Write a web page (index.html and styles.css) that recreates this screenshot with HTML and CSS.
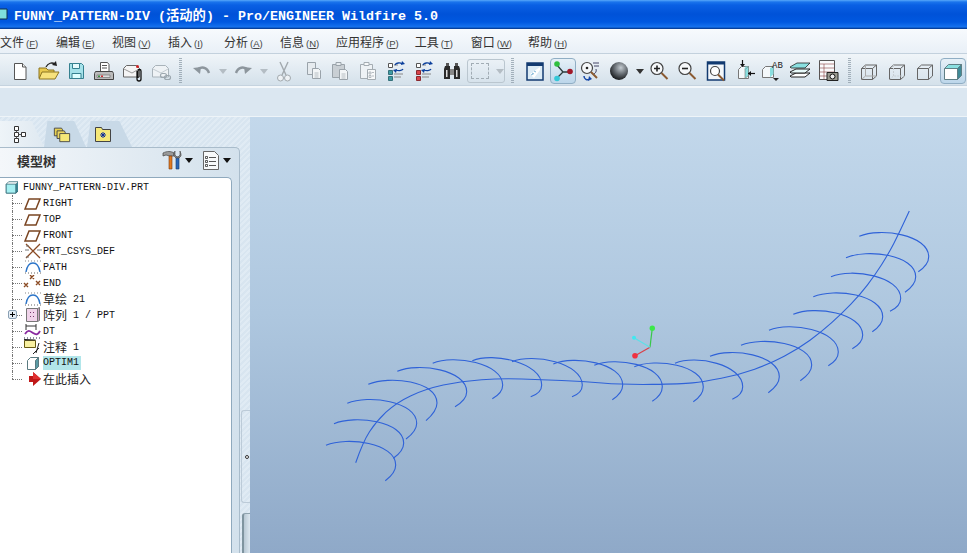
FILE: index.html
```html
<!DOCTYPE html>
<html lang="zh">
<head>
<meta charset="utf-8">
<title>Pro/ENGINEER Wildfire 5.0</title>
<link rel="stylesheet" href="styles.css">
</head>
<body>
<div class="app">
  <header class="titlebar">
    <svg class="title-icon" viewBox="0 0 8 12"><path d="M-4 1h11v10h-11z" fill="#7fe0dc" stroke="#12324a"/></svg>
    <span>FUNNY_PATTERN-DIV (活动的) - Pro/ENGINEER Wildfire 5.0</span>
  </header>
  <nav class="menubar">
    <span class="menu">文件<i>(<u>F</u>)</i></span>
    <span class="menu">编辑<i>(<u>E</u>)</i></span>
    <span class="menu">视图<i>(<u>V</u>)</i></span>
    <span class="menu">插入<i>(<u>I</u>)</i></span>
    <span class="menu">分析<i>(<u>A</u>)</i></span>
    <span class="menu">信息<i>(<u>N</u>)</i></span>
    <span class="menu">应用程序<i>(<u>P</u>)</i></span>
    <span class="menu">工具<i>(<u>T</u>)</i></span>
    <span class="menu">窗口<i>(<u>W</u>)</i></span>
    <span class="menu">帮助<i>(<u>H</u>)</i></span>
  </nav>
  <div class="toolbar">
    <svg class="ic" viewBox="0 0 28 24"><path d="M8.500 4.500h8l3.500 3.500v12.500h-11.500z" fill="#fff" stroke="#555"/><path d="M16.500 4.500v3.500h3.500" fill="#eee" stroke="#555"/></svg>
    <svg class="ic" viewBox="0 0 28 24"><path d="M5 19V9h7l2 2h6v8z" fill="#e8c94e" stroke="#8c7420"/><path d="M5 20l3-7h17l-4 7z" fill="#f7e27c" stroke="#8c7420"/><path d="M12 8c2-4 6-5 9-3" fill="none" stroke="#222" stroke-width="1.300"/><path d="M22 2l1 5-5-1z" fill="#222"/></svg>
    <svg class="ic" viewBox="0 0 28 24"><path d="M7.500 4.500h12l2 2v13h-14z" fill="#a5e2ea" stroke="#35808f"/><path d="M10.500 4.500h7v5h-7z" fill="#e6fafc" stroke="#35808f"/><path d="M10 14.500h9v5h-9z" fill="#dff" stroke="#35808f"/></svg>
    <svg class="ic" viewBox="0 0 28 24"><path d="M10.500 3.500h7l1.500 2v7h-8.500z" fill="#fff" stroke="#555"/><path d="M12 6.500h5M12 9h5" stroke="#555"/><path d="M5.500 12.500h17l1 2v6h-19v-6z" fill="#bbb" stroke="#444"/><path d="M7 16h13v2.500H7z" fill="#ddd" stroke="#666" stroke-width=".6"/><path d="M8 16.500h2v1.500H8z" fill="#3a8f40"/><path d="M11 16.500h2v1.500h-2z" fill="#c33"/></svg>
    <svg class="ic" viewBox="0 0 28 24"><path d="M5.500 9.500l3-3h10l3 3v8.500h-16z" fill="#f5f5f5" stroke="#666"/><path d="M6 10l8 4 7-4" fill="none" stroke="#999"/><circle cx="19.500" cy="7.500" r="1.500" fill="#c22"/><path d="M19 12v8a2 2 0 0 0 4 0v-8a1.500 1.500 0 0 0-3 0v7" fill="none" stroke="#111" stroke-width="1.300"/></svg>
    <svg class="ic dim" viewBox="0 0 28 24"><path d="M6.500 9.500l3-3h10l3 3v8.500h-16z" fill="#eef2f5" stroke="#a9b3ba"/><path d="M7 10l8 4 7-4" fill="none" stroke="#c4ccd2"/><rect x="14.500" y="14.500" width="6" height="4" rx="2" fill="none" stroke="#9ca7af" stroke-width="1.200"/><rect x="18.500" y="16.500" width="6" height="4" rx="2" fill="none" stroke="#9ca7af" stroke-width="1.200"/></svg>
    <span class="sep"></span>
    <svg class="ic" viewBox="0 0 28 24"><path d="M9 11c4-4 10-3 12 3" fill="none" stroke="#8d969d" stroke-width="2.400"/><path d="M5 9l8-1-1 7z" fill="#8d969d"/></svg>
    <span class="caret pale"></span>
    <svg class="ic" viewBox="0 0 28 24"><path d="M19 11c-4-4-10-3-12 3" fill="none" stroke="#8d969d" stroke-width="2.400"/><path d="M23 9l-8-1 1 7z" fill="#8d969d"/></svg>
    <span class="caret pale"></span>
    <svg class="ic" viewBox="0 0 28 24"><path d="M10 3l6 13M18 3l-6 13" stroke="#a2a9ae" stroke-width="1.400"/><circle cx="10.500" cy="19" r="3" fill="#eef2f5" stroke="#a2a9ae"/><circle cx="17.500" cy="19" r="3" fill="#eef2f5" stroke="#a2a9ae"/></svg>
    <svg class="ic gap-l" viewBox="0 0 28 24"><path d="M7.500 3.500h8v12h-8z" fill="#e6ebef" stroke="#9aa3aa"/><path d="M12.500 9.500h6l2 2v8h-8z" fill="#f2f5f7" stroke="#9aa3aa"/><path d="M14.500 14h4M14.500 16h4M14.500 18h4" stroke="#a8b0b6" stroke-width=".8"/></svg>
    <svg class="ic" viewBox="0 0 28 24"><path d="M6.500 5.500h12v13h-12z" fill="#c9cfd4" stroke="#9aa3aa"/><path d="M10 3.500h5v3h-5z" fill="#e6ebef" stroke="#9aa3aa"/><path d="M13.500 10.500h6l2 2v8h-8z" fill="#f2f5f7" stroke="#9aa3aa"/><path d="M15.500 15h4M15.500 17h4M15.500 19h4" stroke="#a8b0b6" stroke-width=".8"/></svg>
    <svg class="ic" viewBox="0 0 28 24"><path d="M6.500 5.500h12v14h-12z" fill="#eef2f5" stroke="#a4acb2"/><path d="M10 3.500h5v3h-5z" fill="#f6f8f9" stroke="#a4acb2"/><path d="M13.500 10.500h8v10h-8z" fill="#f7f9fa" stroke="#a4acb2"/><path d="M15 13h2v2h-2zM15 16.500h2v2h-2zM18 13.500h2M18 17h2" fill="none" stroke="#a4acb2" stroke-width=".8"/></svg>
    <svg class="ic" viewBox="0 0 28 24"><path d="M6.500 4.500h4v4h-4z" fill="#fff" stroke="#555"/><path d="M6.500 11.500h4v4h-4zM6.500 17.500h4v4h-4z" fill="#3f9ca4" stroke="#35707a"/><path d="M12 6h4M12 15h9M12 18h7" stroke="#888"/><path d="M13 6c1-2 5-3 7-1" fill="none" stroke="#0b3f9c" stroke-width="1.300"/><path d="M20 2l3 3-4 1z" fill="#0b3f9c"/><path d="M21 10c-1 2-5 2-7 1" fill="none" stroke="#0b3f9c" stroke-width="1.300"/><path d="M14 14l-3-3 4-1z" fill="#0b3f9c"/></svg>
    <svg class="ic" viewBox="0 0 28 24"><path d="M6.500 4.500h4v4h-4z" fill="#fff" stroke="#555"/><path d="M6.500 11.500h4v4h-4zM6.500 17.500h4v4h-4z" fill="#d8434a" stroke="#8a2a30"/><path d="M12 6h4M12 15h9M12 18h7" stroke="#888"/><path d="M13 6c1-2 5-3 7-1" fill="none" stroke="#0b3f9c" stroke-width="1.300"/><path d="M20 2l3 3-4 1z" fill="#0b3f9c"/><path d="M21 10c-1 2-5 2-7 1" fill="none" stroke="#0b3f9c" stroke-width="1.300"/><path d="M14 14l-3-3 4-1z" fill="#0b3f9c"/></svg>
    <svg class="ic" viewBox="0 0 28 24"><path d="M7 7h5v13H6V10zM16 7h5l1 3v10h-6z" fill="#2a2a2a"/><path d="M8 4h3v3H8zM17 4h3v3h-3z" fill="#555"/><path d="M12 10h4v6h-4z" fill="#888"/><path d="M8 11h1.500v7H8zM18 11h1.500v7H18z" fill="#ddd"/></svg>
    <span class="selbox"><span class="dash"></span><span class="caret pale"></span></span>
    <span class="sep wide"></span>
    <svg class="ic" viewBox="0 0 28 24"><rect x="6" y="4" width="16" height="17" fill="#dcebf5" stroke="#123a70" stroke-width="1.500"/><path d="M6 4h16v3H6z" fill="#123a70"/><path d="M9 15l10-7v3l-6 8z" fill="#fff"/><path d="M10 16l2-1M11 14l2 1M13 12l2 1" stroke="#7fb7d8"/></svg>
    <span class="active-tool"><svg class="ic" viewBox="0 0 28 24"><path d="M14 13L8 6M14 13H22M14 13L8 19" stroke="#2c3c3c" stroke-width="1.300" fill="none"/><circle cx="8" cy="5" r="2.800" fill="#30c040"/><circle cx="21" cy="12.500" r="2.800" fill="#a01828"/><circle cx="8" cy="19.500" r="2.800" fill="#35c8d8"/></svg></span>
    <svg class="ic" viewBox="0 0 28 24"><circle cx="10" cy="9" r="5.500" fill="#f6f8fa" stroke="#444" stroke-width="1.200"/><circle cx="10" cy="9" r="1.300" fill="#222"/><path d="M14 13l6 6" stroke="#8a5a32" stroke-width="2"/><path d="M16 4h6M17 7h5M19 10c1 3-1 4-2 5" stroke="#446" fill="none"/><path d="M7 17c0 3 3 5 6 3" fill="none" stroke="#1848a8" stroke-width="1.500"/><path d="M12 17l3 3-4 2z" fill="#1848a8"/></svg>
    <svg class="ic" viewBox="0 0 28 24"><defs><radialGradient id="sph" cx=".6" cy=".32" r=".72"><stop offset="0" stop-color="#c4cbd1"/><stop offset=".55" stop-color="#5c6268"/><stop offset="1" stop-color="#101214"/></radialGradient></defs><circle cx="14" cy="12" r="9" fill="url(#sph)"/></svg>
    <span class="caret"></span>
    <svg class="ic" viewBox="0 0 28 24"><circle cx="11" cy="9.500" r="6" fill="#f6f8fa" stroke="#444" stroke-width="1.200"/><path d="M8 9.500h6M11 6.500v6" stroke="#222" stroke-width="1.600"/><path d="M15.500 14l6 6" stroke="#8a5a32" stroke-width="2"/></svg>
    <svg class="ic" viewBox="0 0 28 24"><circle cx="11" cy="9.500" r="6" fill="#f6f8fa" stroke="#444" stroke-width="1.200"/><path d="M8 9.500h6" stroke="#222" stroke-width="1.600"/><path d="M15.500 14l6 6" stroke="#8a5a32" stroke-width="2"/></svg>
    <svg class="ic" viewBox="0 0 28 24"><rect x="5.500" y="3" width="17" height="18" fill="#f4f7fa" stroke="#123a70" stroke-width="1.500"/><path d="M5 3h18v2.500H5z" fill="#123a70"/><circle cx="13" cy="12" r="4.500" fill="#fff" stroke="#444" stroke-width="1.200"/><path d="M16 15.500l6 6" stroke="#8a5a32" stroke-width="2"/></svg>
    <svg class="ic" viewBox="0 0 28 24"><path d="M8.500 10.500l3-3h7v12h-10z" fill="#f4f8fa" stroke="#777"/><path d="M14 10.500h4.500V7.500h-3z" fill="#8adfe0"/><path d="M15 10.500l3.500-3v9l-3.500 3z" fill="#8adfe0" stroke="#777" stroke-width=".6"/><path d="M12.500 1v6" stroke="#111" stroke-width="1.200"/><path d="M10 5h5l-2.500 3z" fill="#111"/><path d="M18 14.500h7" stroke="#111" stroke-width="1.200"/><path d="M21 12v5l-3-2.500z" fill="#111"/></svg>
    <svg class="ic" viewBox="0 0 28 24"><path d="M4.500 10.500l3-3h8v11h-11z" fill="#f4f8fa" stroke="#777"/><path d="M12 9l3.500-1.500V15L12 18.500z" fill="#8adfe0"/><text class="ab" x="14" y="9">AB</text><path d="M15 19h6l-3 3z" fill="#222"/></svg>
    <svg class="ic" viewBox="0 0 28 24"><path d="M4 17l6-3h14l-5 4H5z" fill="#fff" stroke="#222"/><path d="M4 13l6-3h14l-5 4H5z" fill="#e8fafa" stroke="#222"/><path d="M4 8l7-4h13l-5 5H5z" fill="#8adfe0" stroke="#222" stroke-width=".8"/></svg>
    <svg class="ic" viewBox="0 0 28 24"><path d="M5.500 1.500h15v19h-15z" fill="#fafbfc" stroke="#555"/><path d="M5.500 5h15M5.500 9h15M5.500 13h15M5.500 17h15M10 5v15" stroke="#8a4040" stroke-width=".6"/><path d="M13 13.500h11v8H13z" fill="#9a9a90" stroke="#222"/><circle cx="18.500" cy="17.500" r="2.500" fill="#eee" stroke="#111"/></svg>
    <span class="sep narrow"></span>
    <svg class="ic" viewBox="0 0 28 24"><g fill="none" stroke="#666"><path d="M7.500 9.500l4-3.500h11v11l-4 3.500h-11z"/><path d="M7.500 9.500h11v11M18.500 9.500l4-3.500"/><path d="M7.500 20.500l4-3.500h11M11.500 6v11" stroke="#aaa"/></g></svg>
    <svg class="ic" viewBox="0 0 28 24"><g fill="none" stroke="#666"><path d="M7.500 9.500l4-3.500h11v11l-4 3.500h-11z"/><path d="M7.500 9.500h11v11M18.500 9.500l4-3.500"/><path d="M7.500 20.500l4-3.500h11M11.500 6v11" stroke="#c8ced3" stroke-dasharray="2 1"/></g></svg>
    <svg class="ic" viewBox="0 0 28 24"><g fill="none" stroke="#666"><path d="M7.500 9.500l4-3.500h11v11l-4 3.500h-11z"/><path d="M7.500 9.500h11v11M18.500 9.500l4-3.500"/></g></svg>
    <span class="active-tool last"><svg class="ic" viewBox="0 0 28 24"><path d="M5.500 9.500l4-4h13l-4 4z" fill="#8adfe0" stroke="#5f7f85"/><path d="M5.500 9.500h13v11h-13z" fill="#fff" stroke="#5f7f85"/><path d="M18.500 9.500l4-4v11l-4 4z" fill="#3f8a96" stroke="#5f7f85"/></svg></span>
  </div>
  <div class="band"></div>
  <main class="main">
    <aside class="side">
      <div class="tabs">
        <span class="tab on"><svg class="tab-ic" viewBox="0 0 16 18"><path d="M2.500 1.500h4v4h-4zM2.500 7.500h4v4h-4zM2.500 13.500h4v4h-4zM9.500 7.500h4v4h-4z" fill="#fff" stroke="#333"/><path d="M4.500 5.500v2M4.500 11.500v2M6.500 9.500h3" stroke="#555"/></svg></span>
        <span class="tab"><svg class="tab-ic" viewBox="0 0 20 18"><path d="M1.500 2.500h8l1 1.500v7h-9z" fill="#e8d050" stroke="#444"/><path d="M4.500 5.500h8l1 1.500v7h-9z" fill="#ecd660" stroke="#444"/><path d="M7.500 8.500h11v9h-11z" fill="#f6e878" stroke="#444"/></svg></span>
        <span class="tab"><svg class="tab-ic" viewBox="0 0 18 18"><path d="M1.500 2.500h6l1 2h8v12h-15z" fill="#f6e878" stroke="#444"/><path d="M9 7v6M6 10h6M7 8l4 4M11 8l-4 4" stroke="#0b2a9c"/></svg></span>
      </div>
      <section class="panel">
        <div class="panel-head">
          <h1>模型树</h1>
          <div class="panel-tools">
            <svg class="hd-ic" viewBox="0 0 20 20"><path d="M1 3c4-2 8-2 11 0v3H8L4 5 1 6z" fill="#9a9a9a" stroke="#444" stroke-width=".7"/><path d="M7 6h3v13H7z" fill="#e07a20" stroke="#7a3a10" stroke-width=".6"/><path d="M14 7h3v12h-3z" fill="#2866b8" stroke="#123a70" stroke-width=".6"/><path d="M13 1v4l2 2h1l2-2V1l1 3v2l-2 2h-3l-2-2V3z" fill="#888" stroke="#444" stroke-width=".6"/></svg>
            <span class="caret dark"></span>
            <svg class="hd-ic list" viewBox="0 0 18 20"><path d="M1.500 1.500h11l4 4v14h-15z" fill="#f7f9fa" stroke="#666"/><path d="M3.500 6.500h2v2h-2zM3.500 10.500h2v2h-2zM3.500 14.500h2v2h-2z" fill="#fff" stroke="#333" stroke-width=".8"/><path d="M7 7.500h7M7 11.500h7M7 15.500h7" stroke="#555"/></svg>
            <span class="caret dark"></span>
          </div>
        </div>
        <div class="tree">
          <div class="root"><svg class="ti cube-root" viewBox="0 0 16 16"><path d="M1.500 4.500l3-3h12v11l-3 3h-12z" fill="#fff" stroke="#39707c"/><path d="M1.500 4.500h12v11h-12z" fill="#a6f0f2" stroke="#39707c"/><path d="M13.500 4.500l3-3v11l-3 3z" fill="#3d8a96" stroke="#39707c"/></svg>FUNNY_PATTERN-DIV.PRT</div>
          <div class="row"><svg class="ti" viewBox="0 0 20 16"><path d="M2 14L6 4h11l-4 10z" fill="none" stroke="#7a4522" stroke-width="1.500"/></svg>RIGHT</div>
          <div class="row"><svg class="ti" viewBox="0 0 20 16"><path d="M2 14L6 4h11l-4 10z" fill="none" stroke="#7a4522" stroke-width="1.500"/></svg>TOP</div>
          <div class="row"><svg class="ti" viewBox="0 0 20 16"><path d="M2 14L6 4h11l-4 10z" fill="none" stroke="#7a4522" stroke-width="1.500"/></svg>FRONT</div>
          <div class="row"><svg class="ti" viewBox="0 0 20 16"><path d="M3 1l14 14M17 1L3 15" stroke="#8a4a22" stroke-width="1.300"/><path d="M2 7h4M14 7h5M3 3h3M3 14h3" stroke="#777"/></svg>PRT_CSYS_DEF</div>
          <div class="row"><svg class="ti" viewBox="0 0 20 16"><path d="M3 13c1-6 4-9 7-9s6 3 7 9" fill="none" stroke="#2b74c8" stroke-width="1.400"/><path d="M2 14h16" stroke="#666" stroke-dasharray="1 2"/><path d="M2 2h16" stroke="#888" stroke-dasharray="1 2"/></svg>PATH</div>
          <div class="row"><svg class="ti" viewBox="0 0 20 16"><path d="M7 0l4 4M11 0L7 4M1 8l4 4M5 8l-4 4M13 6l4 4M17 6l-4 4" stroke="#8a4a22" stroke-width="1.400"/></svg>END</div>
          <div class="row"><svg class="ti" viewBox="0 0 20 16"><path d="M3 13c1-6 4-9 7-9s6 3 7 9" fill="none" stroke="#2b74c8" stroke-width="1.400"/><path d="M2 14h16" stroke="#666" stroke-dasharray="1 2"/><path d="M2 2h16" stroke="#888" stroke-dasharray="1 2"/></svg><span class="zh">草绘</span>&nbsp;21</div>
          <div class="row"><span class="plus"></span><svg class="ti" viewBox="0 0 20 16"><path d="M3.500 1.500h11v13h-11z" fill="#f0d4ea" stroke="#777"/><path d="M14.500 1.500l2-1v13l-2 1z" fill="#c9a4c0" stroke="#777"/><path d="M7 5h1v1H7zM10 5h1v1h-1zM7 9h1v1H7zM10 9h1v1h-1z" fill="#7a3a70"/></svg><span class="zh">阵列</span>&nbsp;1 / PPT</div>
          <div class="row"><svg class="ti" viewBox="0 0 20 16"><path d="M3 1v6M13 1v6M3 3h10" stroke="#333"/><path d="M2 11c3-5 5-3 8-1s5 2 7-2" fill="none" stroke="#8a2aa0" stroke-width="1.800"/><path d="M1 15h17" stroke="#224" stroke-dasharray="1 2"/></svg>DT</div>
          <div class="row"><svg class="ti" viewBox="0 0 20 16"><path d="M1.500 1.500h11v7h-11z" fill="#f8f0a0" stroke="#665a10"/><path d="M1.500 0v1h11" stroke="#333"/><path d="M16 4l-3 10M16 9l-6 6" stroke="#222"/></svg><span class="zh">注释</span>&nbsp;1</div>
          <div class="row"><svg class="ti" viewBox="0 0 20 16"><path d="M4.500 5.500l3-3h8v9l-3 3h-8z" fill="#fff" stroke="#5a7a80"/><path d="M12.500 5.500l3-3v9l-3 3z" fill="#5a9aa4" stroke="#5a7a80"/></svg><span class="hl">OPTIM1</span></div>
          <div class="row"><svg class="ti" viewBox="0 0 20 16"><path d="M6 5h4V1l8 7-8 7v-4H6z" fill="#c01818"/><path d="M10 1l8 7h-8z" fill="#e03030"/></svg><span class="zh">在此插入</span></div>
        </div>
      </section>
      <div class="sash-a"></div>
      <div class="sash-dot"></div>
      <div class="sash-b"></div>
    </aside>
    <section class="viewport">
      <svg class="model" viewBox="250 117 717 436">
        <path class="wire" d="M355.700 462.700Q363 441.700 369.500 431.700Q376 421.700 386 412.200Q396 402.700 410.500 395.900Q425 389 443.300 385Q461.700 381 481.700 379.700Q501.700 378.300 521.700 379Q541.700 379.700 561.700 380.500Q581.700 381.300 602 383Q622.300 384.700 652 384.400Q681.700 384 692.500 382.900Q703.300 381.700 721.300 378.200Q739.300 374.700 754.700 369.200Q770 363.700 784.200 356.200Q798.300 348.700 810 340.200Q821.700 331.700 831.700 322.700Q841.700 313.700 850.900 304.200Q860 294.700 867.500 284.900Q875 275 881.700 264.500Q888.300 254 893.800 243.400Q899.300 232.700 909.300 211"/>
        <path class="wire" d="M326 445.300c21-9 69.700-2.300 69.700 19.700q0 8-10.400 15.700"/>
        <path class="wire" d="M334 423.700c21-9 69.700-2.400 69.700 19.300q0 8-10.400 15.300"/>
        <path class="wire" d="M347.300 403.300c21-9 69.400-2 69.400 20q0 8-10.700 15.700"/>
        <path class="wire" d="M368.300 384.300c21-9 68.700-3.300 68.700 18.700q0 8-11 17.700"/>
        <path class="wire" d="M397.300 371.300c21-9 69.400-1.600 69.400 20.400q0 8-11.700 15"/>
        <path class="wire" d="M432.700 363.300c21-9 70-.3 70 21.700q0 8-10.400 13.700"/>
        <path class="wire" d="M472.300 360.700c21-9 69.400 2.300 69.400 24.300q0 8-11 11.700"/>
        <path class="wire" d="M512 361.700c21-9 70.300 1.300 70.300 23.300q0 8-10.300 11.700"/>
        <path class="wire" d="M553.300 364c21-9 69.400-1 69.400 21q0 8-10.400 14.700"/>
        <path class="wire" d="M594.300 365.300c21-9 68-.6 68 21.400q0 8-10 14.600"/>
        <path class="wire" d="M634.300 366.700c21-9 69-1.700 69 20.300q0 8-10 14.700"/>
        <path class="wire" d="M675 363.300c21-9 67.700 1.400 67.700 23.400q0 8-10.400 12.600"/>
        <path class="wire" d="M710 356.300c21-9 69.300-1.600 69.300 20.400q0 8-11 16"/>
        <path class="wire" d="M741 345.300c21-9 70.700-2.300 70.700 19.700q0 8-11.400 15.700"/>
        <path class="wire" d="M769 330.300c21-9 69.300-.3 69.300 21.700q0 8-10 13.700"/>
        <path class="wire" d="M793.300 314.300c21-9 69.400-1.300 69.400 20.700q0 8-10.400 13.700"/>
        <path class="wire" d="M813.300 296.700c21-9 69.400-2 69.400 20q0 8-10.400 15"/>
        <path class="wire" d="M831 276.700c21-9 69.700-.4 69.700 21.600q0 8-10.700 13"/>
        <path class="wire" d="M846 257.700c21-9 69.700-3 69.700 19q0 8-10.700 15.600"/>
        <path class="wire" d="M859.300 236.300c21-9 69.400-1.600 69.400 20.400q0 8-10.400 15"/>
        <path d="M650 347.300L652.300 328.300" class="axis-g"/>
        <path d="M650 347.300L635 355.700" class="axis-r"/>
        <path d="M650 347.300L634 337.700" class="axis-c"/>
        <circle cx="652.300" cy="328.300" r="2.700" fill="#3ce84a"/>
        <circle cx="635" cy="355.700" r="2.800" fill="#f03040"/>
        <circle cx="634" cy="337.700" r="2" fill="#40e8f0"/>
      </svg>
    </section>
  </main>
</div>
</body>
</html>
```
FILE: styles.css
```css
html, body {
  margin: 0;
  height: 553px;
  overflow: hidden;
}
.app {
  width: 967px;
  height: 553px;
  display: flex;
  flex-direction: column;
  font-family: "Liberation Mono", "Noto Sans CJK SC", monospace;
  color: #111;
}
.titlebar {
  height: 29px;
  flex: none;
  box-sizing: border-box;
  display: flex;
  align-items: center;
  gap: 6px;
  color: #fff;
  font-size: 13.33px;
  font-weight: 700;
  white-space: pre;
  background: linear-gradient(#58a8fa 0, #1a74ec 2px, #0a60e4 5px, #0052d8 14px, #0058e0 22px, #1672ee 27px, #0a4cb0 28px, #00348e 29px);
  padding-bottom: 1px;
}
.title-icon {
  width: 8px;
  height: 12px;
  flex: none;
}
.menubar {
  height: 25px;
  flex: none;
  box-sizing: border-box;
  display: flex;
  align-items: center;
  gap: 16px;
  padding-top: 1px;
  background: linear-gradient(#f7fafd, #e9f0f7);
  border-bottom: 1px solid #c3d1dd;
  font: 12px "Noto Sans CJK SC", "Liberation Sans", sans-serif;
  color: #333;
}
.menu {
  white-space: nowrap;
  min-width: 40px;
}
.menu i {
  font: 9.500px "Liberation Sans", sans-serif;
  margin-left: 2px;
  color: #444;
}
.toolbar {
  height: 34px;
  flex: none;
  box-sizing: border-box;
  display: flex;
  align-items: center;
  padding: 2px 0 0 6px;
  background: linear-gradient(#f0f5f9, #d3e0ea);
  border-bottom: 2px solid #f4f8fb;
  box-shadow: inset 0 -1px 0 #c5d3df;
}
.ic {
  width: 28px;
  height: 24px;
  flex: none;
}
.gap-l {
  margin-left: 2px;
  margin-right: -2px;
}
.sep {
  width: 3px;
  height: 26px;
  margin: 0 6px 0 5px;
  flex: none;
  background: repeating-linear-gradient(#8d9ca8 0 1px, transparent 1px 2px);
  opacity: .75;
}
.sep.wide {
  margin: 0 7px 0 6px;
}
.sep.narrow {
  margin: 0 3px 0 6px;
}
.caret {
  width: 0;
  height: 0;
  flex: none;
  margin: 0 2.500px;
  border: 4px solid transparent;
  border-top: 5px solid #333;
  border-bottom: 0;
}
.caret.pale {
  border-top-color: #b4bdc4;
}
.caret.dark {
  border-top-color: #111;
}
.selbox {
  width: 38px;
  height: 24px;
  flex: none;
  box-sizing: border-box;
  margin-left: 1px;
  border: 1px solid #bac6cf;
  border-radius: 3px;
  display: flex;
  align-items: center;
  gap: 4px;
  padding-left: 3px;
}
.dash {
  width: 16px;
  height: 14px;
  border: 1px dashed #a2adb5;
  flex: none;
}
.active-tool {
  width: 26px;
  height: 26px;
  margin: 0 1px;
  flex: none;
  box-sizing: border-box;
  display: flex;
  align-items: center;
  justify-content: center;
  border: 1px solid #90aec4;
  border-radius: 4px;
  background: linear-gradient(#e6f0f7, #bcd6ea);
}
.active-tool.last {
  margin-left: 2px;
}
.ab {
  font: 9px "Liberation Mono", monospace;
  fill: #222;
}
.band {
  height: 29px;
  flex: none;
  background: #dbe7f1;
  border-bottom: 1px solid #eef4f8;
  box-sizing: border-box;
}
.main {
  flex: 1;
  display: flex;
  min-height: 0;
}
.side {
  width: 250px;
  flex: none;
  position: relative;
  display: flex;
  flex-direction: column;
  background: repeating-linear-gradient(135deg, #d8e5f0 0 2px, #e0ebf4 2px 4px);
}
.tabs {
  height: 30px;
  flex: none;
  box-sizing: border-box;
  padding-top: 4px;
  display: flex;
  gap: 0;
}
.tab {
  width: 42px;
  display: flex;
  align-items: center;
  justify-content: center;
  padding-right: 6px;
  box-sizing: border-box;
  background: #c8d9e7;
  clip-path: polygon(0 100%, 8% 0, 72% 0, 100% 100%);
}
.tab:first-child {
  width: 44px;
  padding-right: 4px;
  clip-path: polygon(0 0, 72% 0, 100% 100%, 0 100%);
}
.tab:last-child {
  width: 45px;
  margin-left: 1px;
  padding-right: 13px;
}
.tab.on {
  background: linear-gradient(90deg, #eef4f8, #dfe9f1);
}
.tab-ic {
  width: 18px;
  height: 18px;
}
.panel {
  flex: 1;
  width: 240px;
  box-sizing: border-box;
  border: 1px solid #a9bccb;
  border-left: 0;
  border-bottom: 0;
  border-top-right-radius: 5px;
  background: linear-gradient(90deg, #f4f7fa, #d3e1ec);
  display: flex;
  flex-direction: column;
  min-height: 0;
}
.panel-head {
  height: 29px;
  flex: none;
  box-sizing: border-box;
  display: flex;
  align-items: center;
  justify-content: space-between;
  padding: 0 6px 5px 17px;
}
.panel-head h1 {
  margin: 0;
  font: 700 13px "Noto Sans CJK SC", sans-serif;
  color: #333;
}
.panel-tools {
  display: flex;
  align-items: center;
  gap: 0;
}
.hd-ic {
  width: 20px;
  height: 20px;
}
.hd-ic.list {
  margin-left: 7px;
  height: 20px;
  width: 18px;
}
.tree {
  flex: 1;
  width: 232px;
  box-sizing: border-box;
  background: #fff;
  border: 1px solid #8fa9bd;
  border-left: 0;
  border-bottom: 0;
  border-top-right-radius: 5px;
  padding-top: 1px;
  font-size: 10px;
  color: #111;
}
.root {
  height: 16px;
  display: flex;
  align-items: center;
  padding-left: 5px;
  gap: 5px;
}
.ti {
  width: 20px;
  height: 16px;
  flex: none;
  margin-right: 0;
  background: #fff;
  position: relative;
  z-index: 1;
}
.ti.cube-root {
  width: 13px;
  height: 14px;
}
.row {
  height: 16px;
  display: flex;
  align-items: center;
  padding-left: 23px;
  position: relative;
  white-space: pre;
}
.row::before {
  content: "";
  position: absolute;
  left: 12px;
  top: 0;
  height: 16px;
  border-left: 1px dotted #777;
}
.row::after {
  content: "";
  position: absolute;
  left: 12px;
  top: 8px;
  width: 12px;
  border-top: 1px dotted #777;
}
.row:last-child::before {
  height: 8px;
}
.zh {
  font: 12px "Noto Sans CJK SC", sans-serif;
  color: #222;
  padding-bottom: 2px;
}
.hl {
  background: #b2e6ea;
  padding: 1px 0 2px;
  margin-left: 0;
  width: 38px;
}
.plus {
  position: absolute;
  left: 8px;
  top: 3px;
  z-index: 1;
  width: 9px;
  height: 9px;
  box-sizing: border-box;
  border: 1px solid #8aa0b4;
  border-radius: 2px;
  background: linear-gradient(#000, #000) center / 5px 1px no-repeat, linear-gradient(#000, #000) center / 1px 5px no-repeat, #e4edf5;
}
.sash-a {
  position: absolute;
  left: 241px;
  top: 293px;
  width: 9px;
  height: 93px;
  box-sizing: border-box;
  border: 1px solid #bccbd8;
  border-right: 0;
  border-radius: 3px 0 0 3px;
}
.sash-dot {
  position: absolute;
  left: 245px;
  top: 338px;
  width: 4px;
  height: 4px;
  box-sizing: border-box;
  border: 1px solid #333;
  border-radius: 50%;
  background: #fff;
}
.sash-b {
  position: absolute;
  left: 242px;
  top: 396px;
  width: 8px;
  height: 40px;
  box-sizing: border-box;
  border-left: 2px solid #7f949f;
  border-top: 1px solid #8fa3ae;
  border-radius: 3px 0 0 0;
  background: linear-gradient(90deg, #b8c8d4, #dce7ef);
}
.viewport {
  flex: 1;
  min-width: 0;
  background: linear-gradient(#c3d8eb 0, #aec7df 45%, #8fa9c8 100%);
}
.model {
  display: block;
  width: 717px;
  height: 436px;
}
.wire {
  fill: none;
  stroke: #2f62d8;
  stroke-width: 1.100;
  stroke-linejoin: round;
}
.axis-g {
  stroke: #38c848;
  stroke-width: 1.200;
}
.axis-r {
  stroke: #d84048;
  stroke-width: 1.200;
}
.axis-c {
  stroke: #5ce0e8;
  stroke-width: 1.200;
}
```
